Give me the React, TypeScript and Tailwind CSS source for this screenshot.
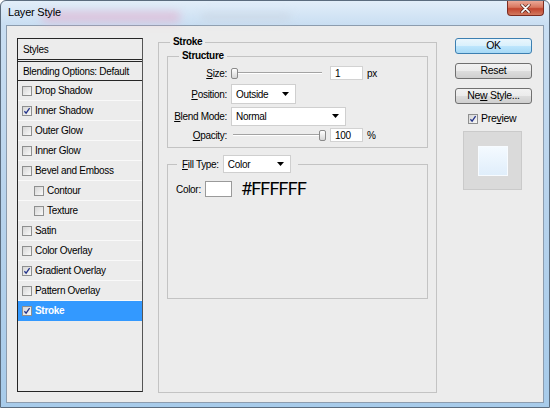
import React from "react";

type Row = { label: string; checked?: boolean; indent?: boolean; active?: boolean };

const effects: Row[] = [
  { label: "Drop Shadow" },
  { label: "Inner Shadow", checked: true },
  { label: "Outer Glow" },
  { label: "Inner Glow" },
  { label: "Bevel and Emboss" },
  { label: "Contour", indent: true },
  { label: "Texture", indent: true },
  { label: "Satin" },
  { label: "Color Overlay" },
  { label: "Gradient Overlay", checked: true },
  { label: "Pattern Overlay" },
  { label: "Stroke", checked: true, active: true },
];

function Check({ checked }: { checked?: boolean }) {
  return (
    <span className="flex h-[10px] w-[10px] shrink-0 items-center justify-center border border-[#8e8f8f] bg-gradient-to-br from-[#d6d6d6] to-[#f9f9f9]">
      {checked && (
        <svg viewBox="0 0 8 8" className="h-[8px] w-[8px]">
          <path d="M1.4 4.3 L3.1 6.2 L6.6 1.2" fill="none" stroke="#23338a" strokeWidth="1.3" />
        </svg>
      )}
    </span>
  );
}

function Arrow() {
  return (
    <svg viewBox="0 0 7 4" className="h-[4px] w-[7px]">
      <path d="M0 0 H7 L3.5 4 Z" fill="#000" />
    </svg>
  );
}

function Select({ value, width, height }: { value: string; width: string; height: string }) {
  return (
    <div className={`flex items-center justify-between border border-[#cfcfcf] bg-white pl-[4px] pr-[6px] ${width} ${height}`}>
      <span>{value}</span>
      <Arrow />
    </div>
  );
}

function Slider({ end }: { end?: boolean }) {
  return (
    <div
      className={`flex h-[12px] w-[95px] items-center bg-[linear-gradient(to_bottom,transparent_5px,#a3a3a3_5px,#a3a3a3_6px,#ffffff_6px,#ffffff_7px,transparent_7px)] bg-[length:91px_12px] bg-no-repeat ${
        end ? "justify-end bg-[position:2px_0]" : "justify-start bg-[position:0_0]"
      }`}
    >
      <div className="h-[11px] w-[7px] rounded-[2px] border border-[#8a8a8a] bg-gradient-to-b from-white to-[#d6d6d6]" />
    </div>
  );
}

function NumBox({ value }: { value: string }) {
  return (
    <div className="ml-[4px] flex h-[14px] w-[33px] items-center border border-[#d2d2d2] bg-white pl-[4px]">
      {value}
    </div>
  );
}

export default function App() {
  return (
    <div className="h-[408px] w-[550px] overflow-hidden font-['Liberation_Sans',Arial,sans-serif] text-[10px] tracking-[-0.3px] text-black">
      <div className="relative flex h-[408px] w-[550px] flex-col rounded-t-[6px] border border-[#5b6c7e] bg-[linear-gradient(180deg,#e2eef9_0px,#c9def2_24px,#b8d3ec_200px,#a7cbea_100%)]">
        {/* title bar */}
        <div className="relative flex h-[24px] items-start justify-between">
          {/* blurred desktop showing through the glass */}
          <div className="pointer-events-none absolute left-[40px] top-[10px] h-[12px] w-[140px] rounded-full bg-[#e7a6c6] opacity-50 blur-[4px]" />
          <div className="pointer-events-none absolute left-[200px] top-[12px] h-[8px] w-[90px] rounded-full bg-[#c7cfdb] opacity-50 blur-[4px]" />
          <span className="relative ml-[7px] mt-[4px] text-[11px] leading-[14px] tracking-[-0.2px] text-black">Layer Style</span>
          <div className="relative mr-[5px] flex h-[15px] w-[37px] items-center justify-center rounded-b-[4px] border border-t-0 border-[#7c2c20] bg-[linear-gradient(180deg,#eba896_0%,#d8775f_45%,#c2452e_55%,#d27a5f_100%)]">
            <svg viewBox="0 0 12 10" className="h-[9px] w-[11px]">
              <path d="M2 1 L10 9 M10 1 L2 9" stroke="#4a1a12" strokeWidth="3.2" strokeLinecap="round" />
              <path d="M2 1 L10 9 M10 1 L2 9" stroke="#ffffff" strokeWidth="1.8" strokeLinecap="round" />
            </svg>
          </div>
        </div>

        {/* client area */}
        <div className="mx-[5px] flex h-[378px] items-start border border-[#8c9cae] bg-[#ececec] pl-[10px] pt-[10px]">
          {/* styles list */}
          <div className="mt-[2px] flex h-[354px] w-[126px] flex-col border border-[#262626] border-r-[#555]">
            <div className="flex h-[23px] items-center border-b-[3px] border-double border-[#262626] pl-[5px]">Styles</div>
            <div className="flex h-[19px] items-center border-b border-[#262626] pl-[5px]">Blending Options: Default</div>
            {effects.map((r) => (
              <div
                key={r.label}
                className={`flex h-[20px] items-center gap-[3px] border-b ${r.indent ? "pl-[16px]" : "pl-[4px]"} ${
                  r.active ? "border-[#3399ff] bg-[#3399ff] font-bold text-white" : "border-[#f9f9f9]"
                }`}
              >
                <Check checked={r.checked} />
                <span>{r.label}</span>
              </div>
            ))}
          </div>

          {/* stroke group */}
          <fieldset className="ml-[15px] h-[357px] w-[279px] border border-[#c3c3c3] px-[8px]">
            <legend className="ml-[3px] px-[3px] font-bold leading-[12px]">Stroke</legend>

            <fieldset className="mt-[2px] border border-[#c3c3c3] pb-[4px]">
              <legend className="ml-[11px] px-[3px] font-bold leading-[12px]">Structure</legend>
              <div className="mt-[2px] flex h-[18px] items-center">
                <span className="w-[59px] text-right"><u>S</u>ize:</span>
                <div className="ml-[4px]"><Slider /></div>
                <NumBox value="1" />
                <span className="ml-[4px]">px</span>
              </div>
              <div className="mt-[2px] flex h-[20px] items-center">
                <span className="w-[59px] text-right"><u>P</u>osition:</span>
                <div className="ml-[4px]"><Select value="Outside" width="w-[65px]" height="h-[20px]" /></div>
              </div>
              <div className="mt-[2px] flex h-[20px] items-center">
                <span className="w-[59px] text-right"><u>B</u>lend Mode:</span>
                <div className="ml-[4px]"><Select value="Normal" width="w-[115px]" height="h-[19px]" /></div>
              </div>
              <div className="mt-[1px] flex h-[16px] items-center">
                <span className="w-[59px] text-right"><u>O</u>pacity:</span>
                <div className="ml-[4px]"><Slider end /></div>
                <NumBox value="100" />
                <span className="ml-[4px]">%</span>
              </div>
            </fieldset>

            <fieldset className="mt-[7px] h-[144px] border border-[#c3c3c3]">
              <legend className="ml-[9px] flex items-center pl-[5px] pr-[7px]">
                <span><u>F</u>ill Type:</span>
                <div className="ml-[4px]"><Select value="Color" width="w-[68px]" height="h-[18px]" /></div>
              </legend>
              <div className="mt-[8px] flex h-[16px] items-center pl-[8px]">
                <span>Color:</span>
                <div className="ml-[4px] h-[16px] w-[27px] border border-[#9a9a9a] bg-white" />
                <span className="ml-[9px] font-['Roboto',sans-serif] text-[18px] leading-[18px] tracking-[-0.8px]">#FFFFFF</span>
              </div>
            </fieldset>
          </fieldset>

          {/* buttons */}
          <div className="ml-[18px] mt-[2px] flex w-[77px] flex-col text-[10.5px]">
            <div className="flex h-[16px] items-center justify-center rounded-[3px] border border-[#3c7fb1] bg-[linear-gradient(180deg,#eaf6fd_0%,#d9f0fc_50%,#bee6fd_50%,#a7d9f5_100%)]">
              OK
            </div>
            <div className="mt-[9px] flex h-[16px] items-center justify-center rounded-[3px] border border-[#707070] bg-[linear-gradient(180deg,#f2f2f2_0%,#ebebeb_50%,#dddddd_50%,#cfcfcf_100%)]">
              Reset
            </div>
            <div className="mt-[9px] flex h-[16px] items-center justify-center rounded-[3px] border border-[#707070] bg-[linear-gradient(180deg,#f2f2f2_0%,#ebebeb_50%,#dddddd_50%,#cfcfcf_100%)]">
              <span>Ne<u>w</u> Style...</span>
            </div>
            <div className="ml-[13px] mt-[10px] flex h-[10px] items-center gap-[3px]">
              <Check checked />
              <span>Pre<u>v</u>iew</span>
            </div>
            <div className="ml-[8px] mt-[7px] flex h-[59px] w-[59px] items-center justify-center border border-[#cacaca] bg-[#dadada] bg-[radial-gradient(#cdcdcd_0.6px,transparent_0.6px)] bg-[length:2px_2px]">
              <div className="h-[30px] w-[30px] border border-[#f7fbff] bg-gradient-to-b from-[#f4faff] to-[#e0eefb]" />
            </div>
          </div>
        </div>
      </div>
    </div>
  );
}
